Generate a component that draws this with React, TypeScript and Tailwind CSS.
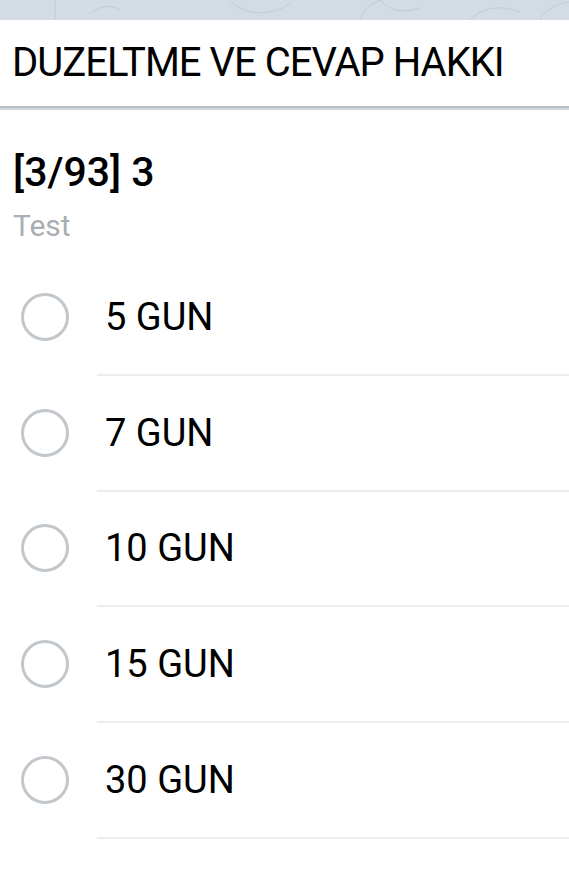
import React from "react";

const options = ["5 GUN", "7 GUN", "10 GUN", "15 GUN", "30 GUN"];

export default function App() {
  return (
    <div className="w-[569px] h-[872px] bg-white overflow-hidden" style={{ fontFamily: "Roboto, 'Liberation Sans', sans-serif" }}>
      <div className="h-[20px] bg-[#d3dbe4] relative overflow-hidden">
        <svg width="569" height="20" className="absolute inset-0" fill="none" stroke="#c3ccd7" strokeWidth="1">
          <path d="M55 0 L55 20" />
          <path d="M90 14 C100 6 110 4 120 10" />
          <path d="M230 2 C250 16 270 16 290 4" />
          <path d="M380 0 C390 10 400 14 420 8" />
          <path d="M360 20 C364 10 370 4 380 0" />
          <path d="M470 20 C480 8 500 4 520 12" />
          <path d="M540 20 C545 10 555 4 569 2" />
        </svg>
      </div>
      <div className="h-[86px] bg-white flex items-center pl-[12px]">
        <span className="text-[40px] text-black leading-none tracking-[-1px]">DUZELTME VE CEVAP HAKKI</span>
      </div>
      <div className="h-[2px] bg-[#b9bfc6]" />
      <div className="h-[2px] bg-[#cfd6de]" />
      <div className="pl-[13px]">
        <div className="pt-[38px] text-[41px] font-medium text-black leading-[48px]">[3/93] 3</div>
        <div className="mt-[12px] text-[30px] text-[#a8aeb4] leading-[36px]">Test</div>
      </div>
      <div className="mt-[16px]">
        {options.map((o) => (
          <div key={o}>
            <div className="h-[113.75px] flex items-center">
              <div className="ml-[21px] w-[48px] h-[48px] rounded-full border-[3px] border-[#c2c7cc]" />
              <span className="ml-[36px] text-[38px] text-black leading-none">{o}</span>
            </div>
            <div className="h-[2px] ml-[97px] bg-[#ebeef0]" />
          </div>
        ))}
      </div>
    </div>
  );
}
